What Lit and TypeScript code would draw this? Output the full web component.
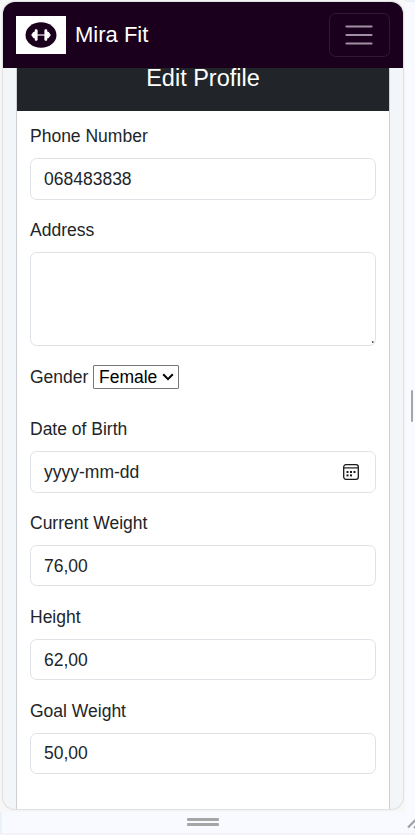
import { LitElement, html, css, svg } from "lit";
import { customElement, property } from "lit/decorators.js";

@customElement("form-field")
class FormField extends LitElement {
  @property() label = "";
  @property() value = "";
  @property({ type: Boolean }) date = false;
  @property({ type: Boolean }) multiline = false;
  @property({ type: Boolean, reflect: true }) decimal = false;

  static styles = css`
    :host { display: block; margin-bottom: 17px; }
    .label { height: 26px; line-height: 26px; margin-bottom: 9px; white-space: nowrap; }
    .control {
      display: flex; align-items: center; justify-content: space-between;
      box-sizing: border-box; height: 42px; padding: 0 16px 0 13px;
      border: 1px solid #dee2e6; border-radius: 6.6px; background: #fff;
      line-height: 20px;
    }
    :host([decimal]) { margin-bottom: 18px; }
    :host([decimal]) .control { height: 41px; padding-top: 1px; }
    :host([decimal]:last-child) .control { padding-top: 0; padding-bottom: 1px; }
    .multiline { height: 94px; padding: 0 1px 2px; align-items: flex-end; justify-content: flex-end; }
    .grip { width: 2px; height: 2px; background: linear-gradient(90deg, #555 50%, #bbb 50%); }
    svg { display: block; }
  `;

  render() {
    return html`
      <div class="label">${this.label}</div>
      ${this.multiline
        ? html`<div class="control multiline"><i class="grip"></i></div>`
        : html`<div class="control">
            <span>${this.value}</span>
            ${this.date
              ? html`<svg width="16" height="16" viewBox="0 0 16 16">
                  <rect x="0.7" y="0.7" width="14.6" height="14.6" rx="2.2" fill="none" stroke="#1c1a1e" stroke-width="1.3" />
                  <path d="M1 3.9H15" stroke="#1c1a1e" stroke-width="1.2" />
                  ${[[3.5, 7], [7, 7], [10.5, 7], [3.5, 10.4], [7, 10.4]].map(
                    ([x, y]) => svg`<rect x=${x} y=${y} width="2" height="2" fill="#1c1a1e" />`
                  )}
                </svg>`
              : ""}
          </div>`}
    `;
  }
}

@customElement("app-root")
class AppRoot extends LitElement {
  static styles = css`
    :host {
      display: flex; flex-direction: column; position: relative; box-sizing: border-box;
      width: 415px; height: 835px; padding: 2px 0 0 3px; overflow: hidden;
      background:
        linear-gradient(#f2f4f8, #f2f4f8) 0 833px / 415px 2px no-repeat,
        linear-gradient(#e9f0f8, #e9f0f8) 405px 0 / 10px 2px no-repeat,
        linear-gradient(90deg, #ebf1f9 2px, #f8faff 2px);
      font: 17.5px "Liberation Sans", Arial, sans-serif; color: #212529;
    }
    .top { position: absolute; left: 0; top: 0; width: 405px; height: 812px; background: #f7f7f7; }
    .screen {
      position: relative; display: flex; flex-direction: column; flex: none;
      width: 400px; height: 806.5px; overflow: hidden; border-radius: 12px;
      background: #f2f6f9; box-shadow: 0 0 1px 1px #dededf;
    }
    .nav {
      display: flex; align-items: center; flex: none; box-sizing: border-box;
      height: 66px; padding: 0 13px; background: #1b001d; color: #fff;
    }
    .logo { width: 50px; height: 38px; background: #fff; }
    .brand { flex: 1; margin-left: 9px; font-size: 22px; line-height: 30px; }
    .toggle {
      display: flex; align-items: center; justify-content: center; box-sizing: border-box;
      width: 61px; height: 44px; padding-right: 1px; border: 1px solid #321934; border-radius: 6.6px;
    }
    svg { display: block; }
    .card {
      flex: 1; box-sizing: border-box; width: 374px; margin-left: 13px;
      border: solid #cdd0d3; border-width: 0 1px; background: #fff;
    }
    .title {
      display: flex; align-items: center; justify-content: center; height: 43px;
      background: #212529; color: #fff; font-size: 23.5px;
    }
    .title span { line-height: 26px; margin-bottom: 23px; }
    .form { padding: 12px 13px 0; }
    .gender { display: flex; align-items: center; height: 28px; margin: 17px 0 25px; line-height: 20px; }
    .select {
      display: flex; align-items: center; justify-content: space-between; box-sizing: border-box;
      width: 86px; height: 24px; margin-left: 4.6px; padding: 0 4px 0 5px;
      border: 1px solid #767676; border-radius: 1px; color: #000;
    }
    .handle { display: flex; flex-direction: column; gap: 2px; flex: none; width: 32px; margin: 9.5px 0 0 184px; }
    .handle i { height: 3px; border-radius: 1px; background: #a6a6a6; }
    .side { position: absolute; left: 411px; top: 390px; width: 2px; height: 32px; border-radius: 1px; background: #a6a6a6; }
    .corner { position: absolute; left: 405px; top: 816px; }
  `;

  render() {
    return html`
      <div class="top"></div>
      <main class="screen">
        <nav class="nav">
          <svg class="logo" viewBox="0 0 50 38">
            <ellipse cx="25" cy="19" rx="15.5" ry="12.8" fill="#1b001d" />
            <path d="M20 19H30" stroke="#c9bfca" stroke-width="1.6" />
            <path d="M15.2 19L17.3 15.9L18.8 15.4V13.8L20.2 13L21.6 14V24L20.2 25L18.8 24.2V22.6L17.3 22.1ZM34.8 19L32.7 15.9L31.2 15.4V13.8L29.8 13L28.4 14V24L29.8 25L31.2 24.2V22.6L32.7 22.1Z" fill="#fff" />
          </svg>
          <span class="brand">Mira Fit</span>
          <div class="toggle">
            <svg width="28" height="20" viewBox="0 0 28 20">
              <path d="M1.5 1.5H26.5M1.5 10H26.5M1.5 18.5H26.5" stroke="#a18fa3" stroke-width="2.2" stroke-linecap="round" />
            </svg>
          </div>
        </nav>
        <section class="card">
          <div class="title"><span>Edit Profile</span></div>
          <div class="form">
            <form-field label="Phone Number" value="068483838"></form-field>
            <form-field label="Address" multiline></form-field>
            <div class="gender">
              Gender
              <div class="select">
                <span>Female</span>
                <svg width="12" height="8" viewBox="0 0 12 8">
                  <path d="M1.2 1.3L6 6.1L10.8 1.3" fill="none" stroke="#000" stroke-width="2" />
                </svg>
              </div>
            </div>
            <form-field label="Date of Birth" value="yyyy-mm-dd" date></form-field>
            <form-field label="Current Weight" value="76,00" decimal></form-field>
            <form-field label="Height" value="62,00" decimal></form-field>
            <form-field label="Goal Weight" value="50,00" decimal></form-field>
          </div>
        </section>
      </main>
      <div class="handle"><i></i><i></i></div>
      <div class="side"></div>
      <svg class="corner" width="10" height="14" viewBox="0 0 10 14">
        <path d="M3 11.5L13 1.5M9 12L13 8" stroke="#a0a0a0" stroke-width="2.2" />
      </svg>
    `;
  }
}
